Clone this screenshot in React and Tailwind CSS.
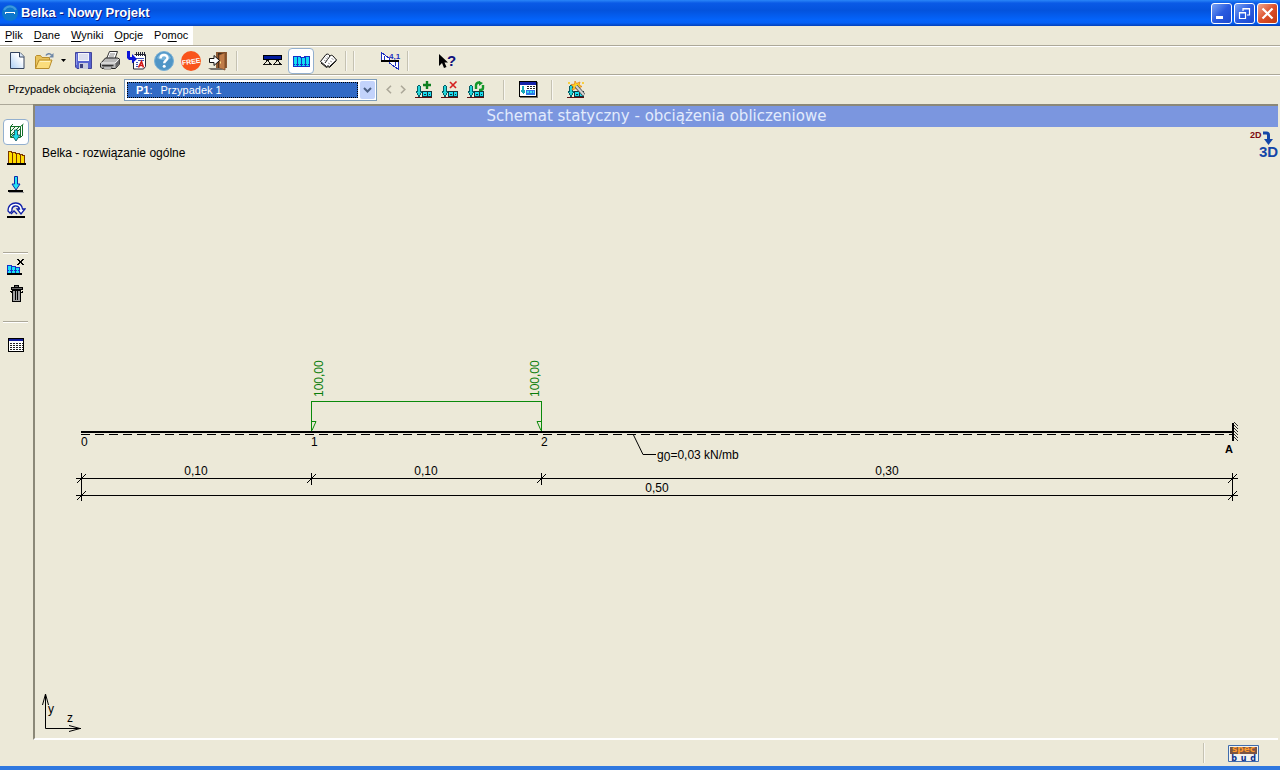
import React, { useState } from 'react';

const HATCH = [0, 1, 2, 3, 4, 5];

function TitleIcon() {
  return (
    <svg width="16" height="16" viewBox="0 0 16 16">
      <circle cx="8" cy="8" r="8" fill="#0d78cc" />
      <path d="M2 5a7 7 0 0 1 12 0" fill="none" stroke="#3f97dd" strokeWidth="2" />
      <path d="M3 7h10v2h-1V8H4v1H3z" fill="#fff" />
    </svg>
  );
}

function NewIcon() {
  return (
    <svg width="15" height="17" viewBox="0 0 15 17">
      <defs>
        <linearGradient id="sheet" x1="1" y1="0" x2="0" y2="1">
          <stop offset="0.3" stopColor="#fff" />
          <stop offset="1" stopColor="#a9cdf5" />
        </linearGradient>
      </defs>
      <path d="M.5.5h9.500l4 4v12H.5z" fill="url(#sheet)" stroke="#33435f" />
      <path d="M9.500 .5v4.500h4.500" fill="#dbe9fa" stroke="#33435f" />
    </svg>
  );
}

function OpenIcon() {
  return (
    <svg width="19" height="18" viewBox="0 0 19 18">
      <path d="M.5 16.500v-12l1-1h4l1.500 2h7.500v3" fill="#e9c45c" stroke="#b98d2c" />
      <path d="M.5 16.500l3.500-8.500h13l-3 8.500z" fill="#fbdd7c" stroke="#b98d2c" />
      <path d="M5 9.500h10" stroke="#fff3bf" />
      <path d="M11 3.500c1-2 4-2.500 5.500-.5" fill="none" stroke="#6c86a6" strokeWidth="1.500" />
      <path d="M18.500 1v4.500H14z" fill="#6c86a6" />
    </svg>
  );
}

function SaveIcon() {
  return (
    <svg width="17" height="17" viewBox="0 0 17 17">
      <path d="M.5.5h16v16H2l-1.500-1.500z" fill="#5663cf" stroke="#43459a" />
      <path d="M3 1h11v8H3z" fill="#f3f4fb" />
      <path d="M4 3h9M4 5h9M4 7h9" stroke="#c2c7e4" />
      <path d="M4 11h9v6H4z" fill="#c8cbdc" />
      <path d="M5 12h3v4H5z" fill="#3b3f7c" />
      <path d="M1.500 2v11" stroke="#8b95ea" />
    </svg>
  );
}

function PrintIcon() {
  return (
    <svg width="20" height="19" viewBox="0 0 20 19">
      <path d="M6 9L9.500.5h8L14.500 9z" fill="#fff" stroke="#333" />
      <path d="M10 3h5M9 5h5M8.500 7h5" stroke="#888" />
      <path d="M.5 12.500l5-5.500h12l2 1v5l-4 4.500H2l-1.500-1.500z" fill="#b9b9b9" stroke="#222" />
      <path d="M1 12h14l4-4" fill="none" stroke="#f4f4f4" />
      <path d="M2 14.500h11.500" stroke="#333" strokeWidth="1.500" />
      <path d="M15.500 12.500v4.500l4-4.500V8z" fill="#666" />
      <path d="M3 16h9l-1 2H4z" fill="#fff" stroke="#444" strokeWidth=".7" />
    </svg>
  );
}

function ExportIcon() {
  return (
    <svg width="20" height="19" viewBox="0 0 20 19">
      <path d="M7.500 3.500h11v12l-2 2.500h-10v-8" fill="#fff" stroke="#223" />
      <path d="M9.500 1v4M11.500 1v4M13.500 1v4M15.500 1v4M17.500 1v4" stroke="#223" shapeRendering="crispEdges" />
      <path d="M9 7.500h8M11 9.500h6M9 11.500h2M9 13.500h2M9 15.500h2" stroke="#4453b8" />
      <path d="M11.500 16.500l3-6 2 6M12.500 14.500h3" fill="none" stroke="#d01818" strokeWidth="1.600" />
      <path d="M0 0h3v6h2V3l5 5-5 4.500V9H2L0 7z" fill="#0a14d8" />
    </svg>
  );
}

function HelpIcon() {
  return (
    <svg width="20" height="20" viewBox="0 0 20 20">
      <circle cx="10" cy="10" r="9.500" fill="#4f95c6" stroke="#79b0d6" />
      <path d="M3 7a7.500 7.500 0 0 1 14 0c-4 3-9 3-14 0z" fill="#77b3da" />
      <path d="M6.500 7.500c0-4.500 7-4.500 7-.5 0 2.500-3.300 2.500-3.300 5.200" fill="none" stroke="#fff" strokeWidth="2.400" />
      <circle cx="10.200" cy="15.200" r="1.500" fill="#fff" />
    </svg>
  );
}

function FreeIcon() {
  return (
    <svg width="20" height="20" viewBox="0 0 20 20">
      <circle cx="10" cy="10" r="10" fill="#f9541c" />
      <text x="10" y="13" textAnchor="middle" transform="rotate(-8 10 10)" fill="#fff" fontSize="7" fontWeight="700" fontFamily="Liberation Sans, sans-serif">FREE</text>
    </svg>
  );
}

function ExitIcon() {
  return (
    <svg width="20" height="20" viewBox="0 0 20 20">
      <path d="M8 1h11v16H8z" fill="#8d5a33" />
      <path d="M10 2h7v15h-7z" fill="#3e2c1e" />
      <path d="M11 4l6-2.500V19l-6-2z" fill="#c07c48" stroke="#74421f" strokeWidth=".8" />
      <path d="M12.500 10.500v2" stroke="#ffe08a" />
      <path d="M0 17h11l6 2H3z" fill="#77736c" />
      <path d="M1.500 7.500H6v-3l5.500 5L6 14.500v-3H1.500z" fill="#fff" stroke="#111" />
    </svg>
  );
}

function BeamIcon() {
  return (
    <svg width="19" height="11" viewBox="0 0 19 11" shapeRendering="crispEdges">
      <path d="M0 0h19v5H0z" fill="#000" />
      <path d="M1 1h17v3H1z" fill="#001a9c" />
      <path d="M4.500 5l-3 4M4.500 5l3 4M14.500 5l-3 4M14.500 5l3 4M0 9.500h9M10 9.500h9" fill="none" stroke="#111" />
    </svg>
  );
}

function LoadIcon() {
  return (
    <svg width="17" height="12" viewBox="0 0 17 12" shapeRendering="crispEdges">
      <path d="M.5 1.500h7v1h4v-1h5v10H.5z" fill="#12dcf2" stroke="#1530c8" />
      <path d="M4.500 2v9M8.500 2v9M12.500 2v9" stroke="#1530c8" />
      <path d="M1 9.500h15" stroke="#1530c8" strokeDasharray="1 1" />
    </svg>
  );
}

function BookIcon() {
  return (
    <svg width="17" height="15" viewBox="0 0 17 15">
      <path d="M.5 8.500L6 1.500c2-1 3 0 4 1.500 1-1 2-1 3 0l3.500 4-7 6.500c-1-.8-2-.8-3 0z" fill="#fff" stroke="#111" />
      <path d="M10 3L5 10" stroke="#111" />
      <path d="M4 7l2 1.500M5.500 5l2 1.500M7 3.500L8.500 5M8 10l2 1M10 8l2 1M11.500 5.500l2 1" stroke="#999" />
      <path d="M1 10l5.500 4.500c1-1 2-1 3 0l7-7" fill="none" stroke="#111" />
    </svg>
  );
}

function DiagramIcon() {
  return (
    <svg className="overflow-visible" width="19" height="18" viewBox="0 0 19 18">
      <g shapeRendering="crispEdges">
        <path d="M.5 8V.5l8 6V8M8.500 9v2l9 6.500V9" fill="#fff" stroke="#1c2fc0" />
        <path d="M3.500 4v4M14.500 9v5" stroke="#1c2fc0" />
        <path d="M0 8h18v2H0z" fill="#000" />
      </g>
      <text x="8" y="7" fill="#1c2fc0" fontSize="8" fontWeight="700" fontFamily="Liberation Sans, sans-serif">4,1</text>
    </svg>
  );
}

function WhatsThisIcon() {
  return (
    <svg className="overflow-visible" width="17" height="16" viewBox="0 0 17 16">
      <path d="M0 1v12l3-3 2 5 2.500-1L5.500 9.500H9z" fill="#000" />
      <text x="8" y="13" fill="#10107c" fontSize="15" fontWeight="700" fontFamily="Liberation Sans, sans-serif">?</text>
    </svg>
  );
}

function CaseIcon({ kind }) {
  return (
    <svg width="18" height="18" viewBox="0 0 18 18">
      <g shapeRendering="crispEdges">
        <path d="M3 4h2v1h1v5h1v2H6v2H5v1.500H3V14H2v-2H1v-2h1V5h1z" fill="#065e66" />
        <path d="M3 5h2v6h1v1H5v2H3v-2H2v-1h1z" fill="#25d5d8" />
        <path d="M7 10h10v6H7z" fill="#10343c" />
        <path d="M8 11h4v4H8zM13 11h3v4h-3z" fill="#19dcee" />
        <path d="M9 13h2v1H9zM14 13h1v1h-1z" fill="#10343c" />
        <path d="M0 16h17v1H0z" fill="#600f0f" />
      </g>
      {kind === 'add' && <path d="M12 0v8M8 4h8" stroke="#0f7f20" strokeWidth="2.400" />}
      {kind === 'remove' && <path d="M9 1l6 6M15.500 .5L9 7" stroke="#d42020" strokeWidth="1.600" />}
      {kind === 'swap' && (
        <>
          <path d="M9 8V4a3 3 0 0 1 3-2.500h1" fill="none" stroke="#14962a" strokeWidth="2.400" />
          <path d="M12 0l4 2-4 3z" fill="#14962a" />
          <path d="M16 4v3q0 2-3 2h-1" fill="none" stroke="#14962a" strokeWidth="2.400" />
        </>
      )}
      {kind === 'wizard' && (
        <>
          <path d="M8 0l1.500 2.500L13 1l-1 3 3 1.500-3.500 1.500v3L9 7.500 5 9l1.500-3L4 3.500l3.500-.3z" fill="#ffd51e" stroke="#e58218" strokeWidth=".8" />
          <path d="M9 5l8 9" stroke="#555" strokeWidth="3.500" />
          <path d="M9 5l8 9" stroke="#d3d3d3" strokeWidth="2" />
          <path d="M1 1h2v2H1zM15 1h2v2h-2z" fill="#f6cf42" />
        </>
      )}
    </svg>
  );
}

function CaseWindowIcon() {
  return (
    <svg width="19" height="17" viewBox="0 0 19 17" shapeRendering="crispEdges">
      <path d="M1 1h18v16H1z" fill="#77736a" />
      <path d="M.5.5h17v15H.5z" fill="#fff" stroke="#000" />
      <path d="M1 1h16v3H1z" fill="#1422a8" />
      <path d="M8 5.500h8M8 7.500h8" stroke="#222" strokeDasharray="2 1" />
      <path d="M3 5h2v4h1v2l-2 2-2-2V9h1z" fill="#19aab8" />
      <path d="M7 9h9v5H7z" fill="#2b76e8" />
      <path d="M8 11h2M11 11h2M14 11h1" stroke="#39e0f0" strokeWidth="2" />
    </svg>
  );
}

function StandardLoadIcon() {
  return (
    <svg width="15" height="19" viewBox="0 0 15 19">
      <path d="M1.500 3.500h10v11h-10z" fill="#f2f8ee" stroke="#14702a" />
      <path d="M1.500 3.500L4 1M11.500 3.500L14.500 1M12 14l2-2M13.500 2v10" stroke="#14702a" />
      <path d="M2 8l4-4M2 12l8-8M2 14l3-3M9 8l2-2" stroke="#14702a" />
      <path d="M5.500 7h3v5h2.500L7 18l-4-6h2.500z" fill="#1edbe8" stroke="#0b4a54" strokeWidth=".8" />
    </svg>
  );
}

function TrapezoidIcon() {
  return (
    <svg width="19" height="15" viewBox="0 0 19 15" shapeRendering="crispEdges">
      <path d="M1.500 12V.5h3v1h4v1h4v1h3v1h2V12z" fill="#ffdc00" stroke="#7a3600" />
      <path d="M5.500 2v10M9.500 3v9M13.500 4v8" stroke="#7a3600" />
      <path d="M0 12h19v2H0z" fill="#000" />
    </svg>
  );
}

function PointLoadIcon() {
  return (
    <svg width="16" height="17" viewBox="0 0 16 17">
      <path d="M6.500 .5h3V8H12l-4 6-4-6h2.500z" fill="#25e2f4" stroke="#1029a8" />
      <path d="M0 15h15" stroke="#000" strokeWidth="2" />
      <path d="M1 16.500h15" stroke="#999" />
    </svg>
  );
}

function MomentIcon() {
  return (
    <svg width="19" height="17" viewBox="0 0 19 17">
      <path d="M1 9C1 3 5 .8 9 1c4 .2 6 2.500 6.500 6H18l-4 5-4-5h2.500C12 4.500 10 3.800 8 4 5.500 4.500 4.500 6 5 9l-2 2z" fill="#fff" stroke="#0f1fa8" strokeWidth="1.300" />
      <path d="M4 12l3-3 3 3" fill="none" stroke="#0f1fa8" strokeWidth="1.300" />
      <path d="M0 15h18" stroke="#000" strokeWidth="2" />
    </svg>
  );
}

function ClearLoadsIcon() {
  return (
    <svg width="18" height="17" viewBox="0 0 18 17" shapeRendering="crispEdges">
      <path d="M.5 14V6.500h4v1h4v1h4V14z" fill="#19dff4" stroke="#1530c8" />
      <path d="M4.500 7v7M8.500 8v6" stroke="#1530c8" />
      <path d="M1 11.500h11" stroke="#1530c8" strokeDasharray="1 1" />
      <path d="M0 15h15" stroke="#000" strokeWidth="2" />
      <path d="M10 0l7 6M17 0l-7 6" stroke="#000" strokeWidth="1.300" />
    </svg>
  );
}

function TrashIcon() {
  return (
    <svg width="13" height="17" viewBox="0 0 13 17" shapeRendering="crispEdges">
      <path d="M4.500 2V.5h4V2M1 2.500h11v2H1z" fill="#666" stroke="#000" />
      <path d="M2.500 5h8v11h-8z" fill="#a0a0a0" stroke="#000" />
      <path d="M5.500 6v9M7.500 6v9" stroke="#000" />
      <path d="M0 6h1v1h1M13 6h-1v1h-1" fill="none" stroke="#000" />
    </svg>
  );
}

function TableIcon() {
  return (
    <svg width="16" height="14" viewBox="0 0 16 14" shapeRendering="crispEdges">
      <path d="M.5.5h15v13H.5z" fill="#fff" stroke="#000" />
      <path d="M1 1h14v2H1z" fill="#101c9c" />
      <path d="M2 5.500h13M2 7.500h13M2 9.500h13M2 11.500h13" stroke="#222" strokeDasharray="2 1" />
    </svg>
  );
}

function View3dIcon() {
  return (
    <svg className="overflow-visible" width="30" height="30" viewBox="0 0 30 30" fontFamily="Liberation Sans, sans-serif">
      <text x="2" y="9" fill="#7c0a10" fontSize="9" fontWeight="700">2D</text>
      <path d="M15 4h3.500q2 0 2 2v5" fill="none" stroke="#1446a8" strokeWidth="3" />
      <path d="M16 10h9l-4.500 6z" fill="#1446a8" />
      <text x="11" y="28" fill="#1446a8" fontSize="15" fontWeight="700">3D</text>
    </svg>
  );
}

function Logo() {
  return (
    <svg className="overflow-visible" width="31" height="17" viewBox="0 0 31 17" fontFamily="DejaVu Sans, sans-serif" fontWeight="700">
      <path d="M.5.5h30v16H.5z" fill="#f3f3ee" stroke="#3f6cad" />
      <path d="M2 2h27v7H2z" fill="#7a5444" />
      <text x="15.500" y="7" textAnchor="middle" fill="#ff9a2c" fontSize="9">spec</text>
      <text x="6" y="16" textAnchor="middle" fill="#0a2f8c" fontSize="8">b</text>
      <text x="15.500" y="16" textAnchor="middle" fill="#0a2f8c" fontSize="8">u</text>
      <text x="25" y="16" textAnchor="middle" fill="#0a2f8c" fontSize="8">d</text>
    </svg>
  );
}

const menu = [
  { pre: '', key: 'P', post: 'lik' },
  { pre: '', key: 'D', post: 'ane' },
  { pre: '', key: 'W', post: 'yniki' },
  { pre: '', key: 'O', post: 'pcje' },
  { pre: 'Po', key: 'm', post: 'oc' },
];

const dimensions = [
  { x: 196, y: 475, label: '0,10' },
  { x: 426, y: 475, label: '0,10' },
  { x: 887, y: 475, label: '0,30' },
  { x: 657, y: 492, label: '0,50' },
];

function ToolButton({ label, active, onClick, children }) {
  return (
    <button
      type="button"
      aria-label={label}
      title={label}
      onClick={onClick}
      className={`flex h-[26px] w-[26px] shrink-0 items-center justify-center rounded ${active ? 'border border-[#93b0cf] bg-white' : 'hover:bg-white/60'}`}
    >
      {children}
    </button>
  );
}

function Separator({ className }) {
  return <div className={`h-5 w-[2px] shrink-0 border-l border-r border-l-[#c5c2b2] border-r-[#f8f7f1] ${className}`} />;
}

function Groove() {
  return <div className="h-[2px] border-t border-b border-t-[#aca899] border-b-white" />;
}

function WindowButton({ label, close, children }) {
  return (
    <button
      type="button"
      aria-label={label}
      className={`flex h-[21px] w-[21px] items-center justify-center rounded-[3px] border border-white bg-linear-to-br ${close ? 'from-[#f0a58c] via-[#dd4f28] to-[#c03a10]' : 'from-[#7ba2f3] via-[#2a5be0] to-[#1c49cf]'}`}
    >
      {children}
    </button>
  );
}

function Tick({ x, y }) {
  return <path d={`M${x - 4} ${y + 4}l9-9`} stroke="#000" />;
}

function BeamDrawing() {
  return (
    <svg
      className="block w-full"
      viewBox="35 161 1243 577"
      fontFamily="Liberation Sans, Arial, sans-serif"
      fontSize="12"
      fill="#000"
      role="img"
      aria-label="Schemat statyczny belki"
    >
      {/* Obciążenie ciągłe */}
      <g fill="none" stroke="#0a8a0a">
        <path d="M311.500 431V401.500H541.500V431" shapeRendering="crispEdges" />
        <path d="M312 421.500h4l-4 9M541 421.500h-4l4 9" />
      </g>
      <g fill="#0a7d0a">
        <text transform="translate(323 397) rotate(-90)">100,00</text>
        <text transform="translate(539 397) rotate(-90)">100,00</text>
      </g>

      {/* Belka */}
      <path d="M81 432H1233" stroke="#000" strokeWidth="2" />
      <path d="M81 434.500H1232" stroke="#000" strokeDasharray="9 5" />
      <path d="M1233 423v18" stroke="#000" strokeWidth="2" />
      {HATCH.map(i => (
        <path key={i} d={`M1234 ${422 + i * 3}l4 4`} stroke="#000" strokeWidth=".8" />
      ))}
      <text x="81" y="446">0</text>
      <text x="311" y="446">1</text>
      <text x="541" y="446">2</text>
      <text x="1225" y="453" fontWeight="700" fontSize="11">A</text>

      {/* Ciężar własny */}
      <path d="M633 434l10 20.500h13" fill="none" stroke="#000" />
      <text x="657" y="459">g<tspan dy="2">0</tspan><tspan dy="-2">=0,03 kN/mb</tspan></text>

      {/* Linie wymiarowe */}
      <g fill="none" stroke="#000">
        <path d="M76 478.500H1238M76 495.500H1238" />
        <path d="M81.500 473v28M311.500 473v12M541.500 473v12M1232.500 473v28" />
      </g>
      {[81, 311, 541, 1232].map(x => <Tick key={x} x={x} y={479} />)}
      {[81, 1232].map(x => <Tick key={x} x={x} y={496} />)}
      {dimensions.map(d => (
        <text key={`${d.x}-${d.y}`} x={d.x} y={d.y} textAnchor="middle">{d.label}</text>
      ))}

      {/* Układ współrzędnych */}
      <g fill="none" stroke="#000">
        <path d="M45.500 694v34.500H81" />
        <path d="M42.500 705l3-11 3 11M69 725.500l11 3-11 3" />
      </g>
      <text x="48" y="713">y</text>
      <text x="67" y="722">z</text>
    </svg>
  );
}

export default function App() {
  const [view, setView] = useState('loads');
  const [tool, setTool] = useState('standard');

  return (
    <div className="flex min-h-screen flex-col bg-[#ece9d8] font-['Liberation_Sans',Arial,sans-serif] text-[11px] text-black">
      <header className="flex h-[26px] items-center bg-[linear-gradient(to_bottom,#2a86f8_0%,#0a5ae6_12%,#0453dd_40%,#0463fa_75%,#0560f5_88%,#0340b8_100%)] pr-[2px] pl-[2px]">
        <TitleIcon />
        <h1 className="ml-[3px] flex-1 text-[13px] font-bold text-white [text-shadow:1px_1px_0_#0a1883]">Belka - Nowy Projekt</h1>
        <div className="flex gap-[2px]">
          <WindowButton label="Minimalizuj">
            <svg width="13" height="13" viewBox="0 0 13 13"><path d="M1 9h7v3H1z" fill="#fff" /></svg>
          </WindowButton>
          <WindowButton label="Przywróć">
            <svg width="13" height="13" viewBox="0 0 13 13">
              <path d="M5 4V1.500h6.500V8H9M1.500 5.500h6v6h-6zM1 6h7M5 2h7" fill="none" stroke="#fff" strokeWidth="1.200" />
            </svg>
          </WindowButton>
          <WindowButton label="Zamknij" close>
            <svg width="13" height="13" viewBox="0 0 13 13"><path d="M1.500 1.500l10 10M11.500 1.500l-10 10" stroke="#fff" strokeWidth="2.200" /></svg>
          </WindowButton>
        </div>
      </header>

      <nav className="flex h-[19px]">
        <div className="flex items-center gap-[11px] bg-white px-[5px]">
          {menu.map(m => (
            <button key={m.key} type="button">
              {m.pre}<span className="underline underline-offset-2">{m.key}</span>{m.post}
            </button>
          ))}
        </div>
      </nav>
      <Groove />

      <div className="flex h-[27px] items-center gap-px pl-1">
        <ToolButton label="Nowy"><NewIcon /></ToolButton>
        <ToolButton label="Otwórz"><OpenIcon /></ToolButton>
        <button type="button" aria-label="Ostatnie projekty" className="flex h-[26px] w-[11px] items-center justify-center">
          <svg width="5" height="3" viewBox="0 0 5 3"><path d="M0 0h5L2.500 3z" /></svg>
        </button>
        <ToolButton label="Zapisz"><SaveIcon /></ToolButton>
        <ToolButton label="Drukuj"><PrintIcon /></ToolButton>
        <ToolButton label="Eksportuj"><ExportIcon /></ToolButton>
        <ToolButton label="Pomoc"><HelpIcon /></ToolButton>
        <ToolButton label="Free"><FreeIcon /></ToolButton>
        <ToolButton label="Zakończ"><ExitIcon /></ToolButton>
        <Separator className="mr-5 ml-1" />
        <ToolButton label="Geometria" active={view === 'geometry'} onClick={() => setView('geometry')}><BeamIcon /></ToolButton>
        <div className="ml-[2px] flex gap-px">
          <ToolButton label="Obciążenia" active={view === 'loads'} onClick={() => setView('loads')}><LoadIcon /></ToolButton>
          <ToolButton label="Materiały" active={view === 'materials'} onClick={() => setView('materials')}><BookIcon /></ToolButton>
        </div>
        <Separator className="ml-[3px]" />
        <Separator className="mr-[21px] ml-[5px]" />
        <ToolButton label="Wykresy"><DiagramIcon /></ToolButton>
        <Separator className="mr-6 ml-[3px]" />
        <ToolButton label="Co to jest?"><WhatsThisIcon /></ToolButton>
      </div>
      <Groove />

      <div className="flex h-[28px] items-center pb-px pl-2">
        <label htmlFor="case" className="w-[116px] shrink-0">Przypadek obciążenia</label>
        <div className="flex h-[22px] w-[253px] shrink-0 border border-[#7f9db9] bg-white p-px">
          <div className="m-px mr-0 flex flex-1 items-center border border-dotted border-black bg-[#316ac5] pl-2 text-white">
            <label htmlFor="case" className="mr-2 leading-4"><b>P1</b>:</label>
            <select id="case" className="h-4 flex-1 appearance-none bg-transparent leading-4 outline-none">
              <option>Przypadek 1</option>
            </select>
          </div>
          <span className="pointer-events-none ml-[2px] flex w-[15px] items-center justify-center rounded-[2px] bg-[#c3d3fb]">
            <svg width="9" height="6" viewBox="0 0 9 6"><path d="M1 1l3.500 3.500L8 1" fill="none" stroke="#4d6185" strokeWidth="2" /></svg>
          </span>
        </div>
        <button type="button" aria-label="Poprzedni" className="ml-[5px] flex h-5 w-[14px] items-center justify-center">
          <svg width="6" height="9" viewBox="0 0 6 9"><path d="M5 .8L1.200 4.500 5 8.200" fill="none" stroke="#aca899" strokeWidth="1.600" /></svg>
        </button>
        <button type="button" aria-label="Następny" className="mr-px flex h-5 w-[14px] items-center justify-center">
          <svg width="6" height="9" viewBox="0 0 6 9"><path d="M1 .8l3.800 3.700L1 8.200" fill="none" stroke="#aca899" strokeWidth="1.600" /></svg>
        </button>
        <ToolButton label="Dodaj przypadek"><CaseIcon kind="add" /></ToolButton>
        <ToolButton label="Usuń przypadek"><CaseIcon kind="remove" /></ToolButton>
        <ToolButton label="Zamień przypadek"><CaseIcon kind="swap" /></ToolButton>
        <Separator className="mr-[10px] ml-[14px]" />
        <ToolButton label="Lista przypadków"><CaseWindowIcon /></ToolButton>
        <Separator className="mr-[10px] ml-[10px]" />
        <ToolButton label="Kreator"><CaseIcon kind="wizard" /></ToolButton>
      </div>

      <main className="flex flex-1">
        <aside className="flex w-[33px] shrink-0 flex-col border-t border-[#aca899] pt-[14px] pr-[5px] pl-[3px]">
          <ToolButton label="Obciążenie normowe" active={tool === 'standard'} onClick={() => setTool('standard')}><StandardLoadIcon /></ToolButton>
          <ToolButton label="Obciążenie trapezowe" active={tool === 'trapezoid'} onClick={() => setTool('trapezoid')}><TrapezoidIcon /></ToolButton>
          <ToolButton label="Siła skupiona" active={tool === 'point'} onClick={() => setTool('point')}><PointLoadIcon /></ToolButton>
          <ToolButton label="Moment skupiony" active={tool === 'moment'} onClick={() => setTool('moment')}><MomentIcon /></ToolButton>
          <div className="mt-[29px]"><Groove /></div>
          <ToolButton label="Usuń obciążenia"><ClearLoadsIcon /></ToolButton>
          <ToolButton label="Kosz"><TrashIcon /></ToolButton>
          <div className="mt-[15px] mb-[9px]"><Groove /></div>
          <ToolButton label="Tabela obciążeń"><TableIcon /></ToolButton>
        </aside>

        <section className="mr-[2px] flex min-w-0 flex-1 flex-col border-t-2 border-b-2 border-l-2 border-t-[#8b8878] border-b-white border-l-[#8b8878]">
          <h2 className="bg-[#7b96df] text-center font-['DejaVu_Sans',Verdana,sans-serif] text-[15px] leading-[21px] text-[#e2ebfc]">Schemat statyczny - obciążenia obliczeniowe</h2>
          <div className="flex h-[34px] items-start justify-between pl-[7px]">
            <p className="mt-[18px] text-[12px] leading-4">Belka - rozwiązanie ogólne</p>
            <button type="button" aria-label="Widok 3D" className="mt-[2px]"><View3dIcon /></button>
          </div>
          <BeamDrawing />
        </section>
      </main>

      <footer className="flex h-[30px] items-center justify-end border-b-4 border-[#2f78e0] pr-[21px]">
        <Separator className="mr-[23px]" />
        <a href="#specbud" aria-label="specbud"><Logo /></a>
      </footer>
    </div>
  );
}
